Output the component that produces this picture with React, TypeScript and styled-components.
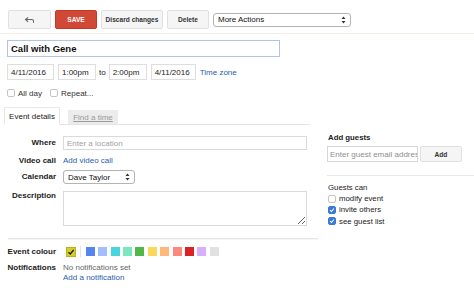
import { createGlobalStyle } from 'styled-components';
import styled from 'styled-components';

const GlobalStyle = createGlobalStyle`
  body {
    margin: 0;
    background: #fff;
  }
  * {
    box-sizing: border-box;
  }
`;

const SWATCHES = [
  '#5484ed',
  '#a4bdfc',
  '#46d6db',
  '#7ae7bf',
  '#51b749',
  '#fbd75b',
  '#ffb878',
  '#ff887c',
  '#dc2127',
  '#dbadff',
  '#e1e1e1',
];

function UpDown() {
  return (
    <svg width="5" height="8" viewBox="0 0 5 8" aria-hidden="true">
      <path d="M2.5 0.5 L4.5 3 H0.5 Z M2.5 7.5 L4.5 5 H0.5 Z" fill="#333" />
    </svg>
  );
}

function Tick({ color }: { color: string }) {
  return (
    <svg width="8" height="8" viewBox="0 0 8 8" aria-hidden="true">
      <path d="M1.5 4.2 L3.3 6 L6.6 2" fill="none" stroke={color} strokeWidth="1.4" />
    </svg>
  );
}

function Check({ checked }: { checked?: boolean }) {
  return <Box $checked={checked}>{checked && <Tick color="#fff" />}</Box>;
}

export default function App() {
  return (
    <Page>
      <GlobalStyle />
      <Toolbar>
        <Button $w={43} aria-label="Back">
          <svg width="11" height="8" viewBox="0 0 12 9" aria-hidden="true">
            <path
              d="M4.5 1.5 L1.5 4 L4.5 6.5 M1.5 4 H8.5 Q10.5 4 10.5 6 V7.5"
              fill="none"
              stroke="#666"
              strokeWidth="1.2"
            />
          </svg>
        </Button>
        <Button $w={42} $primary>
          SAVE
        </Button>
        <Button $w={62}>Discard changes</Button>
        <Button $w={42}>Delete</Button>
        <Select $w={138}>
          <span>More Actions</span>
          <UpDown />
        </Select>
      </Toolbar>

      <Head>
        <Title>Call with Gene</Title>
        <DateRow>
          <Field $w={47}>4/11/2016</Field>
          <Field $w={38}>1:00pm</Field>
          <To>to</To>
          <Field $w={38}>2:00pm</Field>
          <Field $w={45}>4/11/2016</Field>
          <Link>Time zone</Link>
        </DateRow>
        <OptionRow>
          <Option>
            <Check />
            All day
          </Option>
          <Option>
            <Check />
            Repeat...
          </Option>
        </OptionRow>
      </Head>

      <Main>
        <LeftCol>
          <Tabs>
            <Tab $active>Event details</Tab>
            <Tab>Find a time</Tab>
          </Tabs>

          <FormRow $top={11}>
            <Label>Where</Label>
            <TextInput $h={14} placeholder="Enter a location" />
          </FormRow>
          <FormRow $top={6}>
            <Label>Video call</Label>
            <LinkLine>Add video call</LinkLine>
          </FormRow>
          <FormRow $top={4}>
            <Label>Calendar</Label>
            <Select $w={72}>
              <span>Dave Taylor</span>
              <UpDown />
            </Select>
          </FormRow>
          <FormRow $top={7} $start>
            <Label>Description</Label>
            <TextArea />
          </FormRow>

          <Divider />

          <FormRow $top={6}>
            <Label>Event colour</Label>
            <Swatches>
              <Swatch $color="#d3cc2c" $picked>
                <Tick color="#222" />
              </Swatch>
              <SwatchSep />
              {SWATCHES.map((c) => (
                <Swatch key={c} $color={c} />
              ))}
            </Swatches>
          </FormRow>
          <FormRow $top={6} $start>
            <Label>Notifications</Label>
            <Stack>
              <Muted>No notifications set</Muted>
              <LinkLine>Add a notification</LinkLine>
            </Stack>
          </FormRow>
        </LeftCol>

        <RightCol>
          <SideTitle>Add guests</SideTitle>
          <GuestRow>
            <GuestInput placeholder="Enter guest email address" />
            <Button $w={42} $h={16}>
              Add
            </Button>
          </GuestRow>
          <SideDivider />
          <SideText>Guests can</SideText>
          <Perm>
            <Check />
            modify event
          </Perm>
          <Perm>
            <Check checked />
            invite others
          </Perm>
          <Perm>
            <Check checked />
            see guest list
          </Perm>
        </RightCol>
      </Main>
    </Page>
  );
}

const Page = styled.div`
  width: 474px;
  height: 290px;
  overflow: hidden;
  padding-top: 10px;
  font-family: 'Liberation Sans', Arial, sans-serif;
  color: #222;
  background: #fff;
`;

const Toolbar = styled.div`
  display: flex;
  align-items: center;
  gap: 4px;
  padding: 0 0 4px 8px;
  border-bottom: 1px solid #f2f0e6;
`;

const Button = styled.div<{ $w: number; $h?: number; $primary?: boolean }>`
  display: flex;
  align-items: center;
  justify-content: center;
  width: ${(p) => p.$w}px;
  height: ${(p) => p.$h ?? 19}px;
  border: 1px solid ${(p) => (p.$primary ? '#c53727' : '#e0e0e0')};
  border-radius: 2px;
  background: ${(p) => (p.$primary ? '#d14836' : '#f5f5f5')};
  color: ${(p) => (p.$primary ? '#fff' : '#333')};
  font-size: 6.6px;
  font-weight: 700;
  white-space: nowrap;
`;

const Select = styled.div<{ $w: number }>`
  display: flex;
  align-items: center;
  justify-content: space-between;
  width: ${(p) => p.$w}px;
  height: 14px;
  padding: 0 4px 0 4px;
  border: 1px solid #b4b4b4;
  border-radius: 3px;
  background: #fff;
  font-size: 8px;
  color: #111;
`;

const Head = styled.div`
  padding-left: 7px;
`;

const Title = styled.div`
  display: flex;
  align-items: center;
  width: 273px;
  height: 17px;
  margin-top: 6px;
  padding-left: 3px;
  border: 1px solid #b3c4e2;
  font-size: 9.5px;
  font-weight: 700;
  color: #111;
`;

const DateRow = styled.div`
  display: flex;
  align-items: center;
  gap: 4px;
  margin-top: 7px;
  height: 16px;
`;

const Field = styled.div<{ $w: number }>`
  display: flex;
  align-items: center;
  width: ${(p) => p.$w}px;
  height: 16px;
  padding-left: 3px;
  border: 1px solid #dedede;
  font-size: 8px;
  color: #222;
`;

const To = styled.span`
  font-size: 8px;
  margin: 0 -1px;
`;

const Link = styled.span`
  font-size: 8px;
  color: #2a5db0;
`;

const OptionRow = styled.div`
  display: flex;
  align-items: center;
  gap: 8px;
  margin-top: 9px;
  height: 8px;
`;

const Option = styled.label`
  display: flex;
  align-items: center;
  gap: 3px;
  font-size: 8px;
  color: #333;
`;

const Box = styled.span<{ $checked?: boolean }>`
  display: inline-flex;
  align-items: center;
  justify-content: center;
  width: 8px;
  height: 8px;
  flex-shrink: 0;
  border: 1px solid ${(p) => (p.$checked ? '#3a7bd5' : '#c4c4c4')};
  border-radius: 2px;
  background: ${(p) => (p.$checked ? '#3a7bd5' : '#fff')};
`;

const Main = styled.div`
  display: grid;
  grid-template-columns: 314px 1fr;
  column-gap: 9px;
  margin-top: 11px;
  padding-left: 4px;
`;

const LeftCol = styled.div`
  display: flex;
  flex-direction: column;
`;

const Tabs = styled.div`
  display: flex;
  align-items: flex-end;
  gap: 8px;
  width: 306px;
  height: 17px;
  border-bottom: 1px solid #e4e4e4;
`;

const Tab = styled.div<{ $active?: boolean }>`
  display: flex;
  align-items: center;
  justify-content: center;
  width: ${(p) => (p.$active ? 56 : 50)}px;
  height: ${(p) => (p.$active ? 18 : 15)}px;
  margin-bottom: -1px;
  border: 1px solid ${(p) => (p.$active ? '#e8e8e8' : '#ececec')};
  border-bottom: ${(p) => (p.$active ? '1px solid #fff' : '1px solid #e4e4e4')};
  background: ${(p) => (p.$active ? '#fff' : '#ececec')};
  color: ${(p) => (p.$active ? '#222' : '#999')};
  text-decoration: ${(p) => (p.$active ? 'none' : 'underline')};
  font-size: 8px;
`;

const FormRow = styled.div<{ $top: number; $start?: boolean }>`
  display: grid;
  grid-template-columns: 52px 1fr;
  column-gap: 7px;
  align-items: ${(p) => (p.$start ? 'start' : 'center')};
  margin-top: ${(p) => p.$top}px;
`;

const Label = styled.div`
  text-align: right;
  font-size: 8px;
  font-weight: 700;
  line-height: 10px;
  color: #222;
  white-space: nowrap;
`;

const TextInput = styled.input<{ $h: number }>`
  width: 244px;
  height: ${(p) => p.$h}px;
  padding: 0 0 0 3px;
  border: 1px solid #dadada;
  font-family: inherit;
  font-size: 8px;
  outline: none;

  &::placeholder {
    color: #a3a3a3;
  }
`;

const LinkLine = styled.div`
  font-size: 8px;
  line-height: 10px;
  color: #2a5db0;
`;

const TextArea = styled.textarea`
  display: block;
  width: 244px;
  height: 35px;
  margin: 0;
  border: 1px solid #dadada;
  resize: both;
  outline: none;
`;

const Divider = styled.div`
  width: 310px;
  margin: 12px 0 0 4px;
  height: 2px;
  border-top: 1px solid #e6e6e6;
  border-bottom: 1px solid #f4f4f4;
`;

const Swatches = styled.div`
  display: flex;
  align-items: center;
  gap: 3.4px;
  padding-left: 3px;
`;

const Swatch = styled.span<{ $color: string; $picked?: boolean }>`
  display: inline-flex;
  align-items: center;
  justify-content: center;
  width: ${(p) => (p.$picked ? 10 : 9)}px;
  height: ${(p) => (p.$picked ? 10 : 9)}px;
  background: ${(p) => p.$color};
  border: ${(p) => (p.$picked ? '1px solid #b8b21c' : 'none')};
`;

const SwatchSep = styled.span`
  width: 1px;
  height: 11px;
  margin: 0 1px;
  background: #e3e3e3;
`;

const Stack = styled.div`
  display: flex;
  flex-direction: column;
`;

const Muted = styled.div`
  font-size: 8px;
  line-height: 10px;
  color: #666;
`;

const RightCol = styled.div`
  display: flex;
  flex-direction: column;
  padding-top: 25px;
`;

const SideTitle = styled.div`
  padding-left: 1px;
  font-size: 7.8px;
  font-weight: 700;
  line-height: 10px;
`;

const GuestRow = styled.div`
  display: flex;
  gap: 2px;
  margin-top: 3px;
`;

const GuestInput = styled.input`
  width: 91px;
  height: 16px;
  padding: 0 0 0 2px;
  border: 1px solid #d6d6d6;
  font-family: inherit;
  font-size: 8px;
  outline: none;

  &::placeholder {
    color: #8e8e8e;
  }
`;

const SideDivider = styled.div`
  height: 1px;
  margin-top: 13px;
  background: #e8e8e8;
`;

const SideText = styled.div`
  margin-top: 7px;
  padding-left: 1px;
  font-size: 7.8px;
  line-height: 10px;
  color: #222;
`;

const Perm = styled.label`
  display: flex;
  align-items: center;
  gap: 3px;
  height: 11.3px;
  padding-left: 1px;
  font-size: 7.8px;
  color: #222;
`;
